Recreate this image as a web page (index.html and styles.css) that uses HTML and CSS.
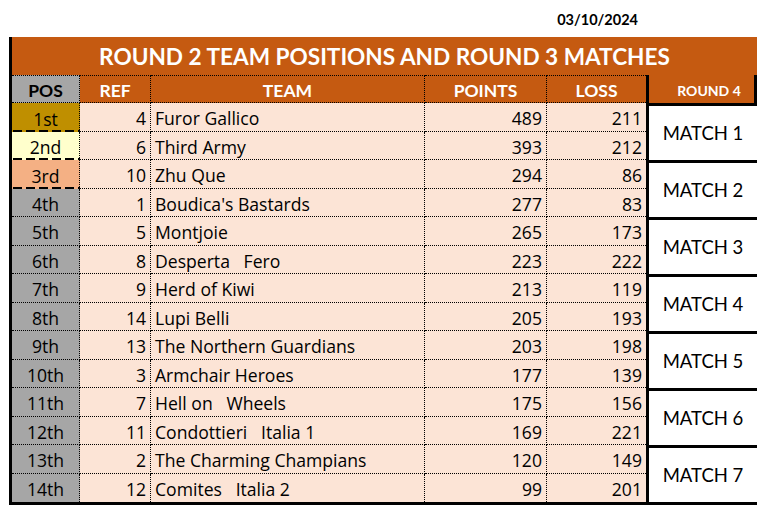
FILE: index.html
```html
<!DOCTYPE html>
<html>
<head>
<meta charset="utf-8">
<link rel="stylesheet" href="styles.css">
</head>
<body>
<div class="top"><span class="date">03/10/2024</span></div>
<div class="sheet">
  <div class="title">ROUND 2 TEAM POSITIONS AND ROUND 3 MATCHES</div>
  <div class="grid">
    <div class="c h pos-h">POS</div>
    <div class="c h">REF</div>
    <div class="c h">TEAM</div>
    <div class="c h">POINTS</div>
    <div class="c h noright">LOSS</div>
    <div class="r4">ROUND 4</div>

    <div class="c pos gold dash">1st</div><div class="c num">4</div><div class="c team">Furor Gallico</div><div class="c num">489</div><div class="c num noright">211</div>
    <div class="m">MATCH 1</div>
    <div class="c pos cream dash">2nd</div><div class="c num">6</div><div class="c team">Third Army</div><div class="c num">393</div><div class="c num noright">212</div>
    <div class="c pos peach dash">3rd</div><div class="c num">10</div><div class="c team">Zhu Que</div><div class="c num">294</div><div class="c num noright">86</div>
    <div class="m">MATCH 2</div>
    <div class="c pos">4th</div><div class="c num">1</div><div class="c team">Boudica's Bastards</div><div class="c num">277</div><div class="c num noright">83</div>
    <div class="c pos">5th</div><div class="c num">5</div><div class="c team">Montjoie</div><div class="c num">265</div><div class="c num noright">173</div>
    <div class="m">MATCH 3</div>
    <div class="c pos">6th</div><div class="c num">8</div><div class="c team">Desperta   Fero</div><div class="c num">223</div><div class="c num noright">222</div>
    <div class="c pos">7th</div><div class="c num">9</div><div class="c team">Herd of Kiwi</div><div class="c num">213</div><div class="c num noright">119</div>
    <div class="m">MATCH 4</div>
    <div class="c pos">8th</div><div class="c num">14</div><div class="c team">Lupi Belli</div><div class="c num">205</div><div class="c num noright">193</div>
    <div class="c pos">9th</div><div class="c num">13</div><div class="c team">The Northern Guardians</div><div class="c num">203</div><div class="c num noright">198</div>
    <div class="m">MATCH 5</div>
    <div class="c pos">10th</div><div class="c num">3</div><div class="c team">Armchair Heroes</div><div class="c num">177</div><div class="c num noright">139</div>
    <div class="c pos">11th</div><div class="c num">7</div><div class="c team">Hell on   Wheels</div><div class="c num">175</div><div class="c num noright">156</div>
    <div class="m">MATCH 6</div>
    <div class="c pos">12th</div><div class="c num">11</div><div class="c team">Condottieri   Italia 1</div><div class="c num">169</div><div class="c num noright">221</div>
    <div class="c pos">13th</div><div class="c num">2</div><div class="c team">The Charming Champians</div><div class="c num">120</div><div class="c num noright">149</div>
    <div class="m">MATCH 7</div>
    <div class="c pos last">14th</div><div class="c num last">12</div><div class="c team last">Comites   Italia 2</div><div class="c num last">99</div><div class="c num noright last">201</div>
  </div>
</div>
</body>
</html>
```

FILE: styles.css
```css
body {
  margin: 0;
  background: #fff;
  color: #000;
  font-family: Lato, "Open Sans", sans-serif;
}

.top {
  height: 37px;
  box-sizing: border-box;
  display: flex;
  justify-content: flex-end;
  align-items: center;
  padding-right: 126px;
  padding-top: 1px;
}

.date {
  font-weight: 700;
  font-size: 14.5px;
}

.sheet {
  margin-left: 9px;
  width: 745px;
  border-left: 3px solid #000;
  border-bottom: 3px solid #000;
}

.title {
  height: 38px;
  background: #c55a11;
  color: #fff;
  font-weight: 700;
  font-size: 22.6px;
  display: flex;
  align-items: center;
  justify-content: center;
}

.grid {
  display: grid;
  grid-template-columns: 68px 71px 274px 122px 99px 111px;
  grid-template-rows: 28px repeat(14, 28.5px);
}

.c {
  box-sizing: border-box;
  border-right: 1px dotted #000;
  border-bottom: 1px dotted #000;
  background: #fce4d6;
  display: flex;
  align-items: center;
  padding-top: 3px;
  font-family: "Open Sans", Lato, sans-serif;
  font-size: 17.6px;
  white-space: pre;
}

.c.noright {
  border-right: none;
}

.c.last {
  border-bottom: none;
}

.h {
  border-top: 1px dotted #000;
  background: #c55a11;
  color: #fff;
  font-family: Lato, "Open Sans", sans-serif;
  font-weight: 700;
  font-size: 17.5px;
  justify-content: center;
  padding-top: 2px;
}

.h.pos-h {
  background: #a6a6a6;
  color: #000;
}

.pos {
  justify-content: center;
  background: #a6a6a6;
}

.pos.gold { background-color: #bf8f00; }
.pos.cream { background-color: #ffffcc; }
.pos.peach { background-color: #f4b084; }

.pos.dash {
  border-bottom: none;
  background-image: repeating-linear-gradient(90deg, #000 0 9px, transparent 9px 13px);
  background-size: 100% 2px;
  background-position: 1px 100%;
  background-repeat: no-repeat;
}

.num {
  justify-content: flex-end;
  padding-right: 4px;
}

.team {
  padding-left: 4px;
}

.r4 {
  box-sizing: border-box;
  border-left: 3px solid #000;
  border-right: 3px solid #000;
  background: #c55a11;
  color: #fff;
  font-weight: 700;
  font-size: 14px;
  display: flex;
  align-items: center;
  justify-content: center;
  padding-left: 15px;
  padding-top: 3px;
}

.m {
  grid-row: span 2;
  box-sizing: border-box;
  border-left: 3px solid #000;
  border-top: 3px solid #000;
  background: #fff;
  display: flex;
  align-items: center;
  justify-content: center;
  font-size: 18.5px;
}
```
